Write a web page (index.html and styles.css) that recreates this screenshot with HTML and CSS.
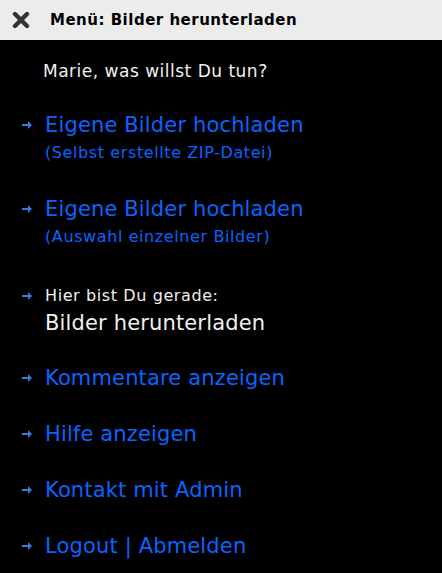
FILE: index.html
```html
<!DOCTYPE html>
<html lang="de">
<head>
  <meta charset="UTF-8" />
  <meta name="viewport" content="width=device-width, initial-scale=1" />
  <title>Menü: Bilder herunterladen</title>
  <link rel="stylesheet" href="styles.css">
</head>
<body>

  <header class="menu-header">
    <svg class="close-icon" width="18" height="18" viewBox="0 0 18 18" aria-label="Schließen">
      <path d="M3 3 L15 15 M15 3 L3 15" stroke="#333" stroke-width="4.4" stroke-linecap="round" />
    </svg>
    <h1>Menü: Bilder herunterladen</h1>
  </header>

  <p class="greeting">Marie, was willst Du tun?</p>

  <ul class="menu">
    <li class="item">
      <span class="arrow"></span>
      <a href="#">Eigene Bilder hochladen</a>
      <span class="sub">(Selbst erstellte ZIP-Datei)</span>
    </li>
    <li class="item">
      <span class="arrow"></span>
      <a href="#">Eigene Bilder hochladen</a>
      <span class="sub">(Auswahl einzelner Bilder)</span>
    </li>
    <li class="item current">
      <span class="arrow"></span>
      <span class="hint">Hier bist Du gerade:</span>
      <span class="here">Bilder herunterladen</span>
    </li>
    <li class="item">
      <span class="arrow"></span>
      <a href="#">Kommentare anzeigen</a>
    </li>
    <li class="item">
      <span class="arrow"></span>
      <a href="#">Hilfe anzeigen</a>
    </li>
    <li class="item">
      <span class="arrow"></span>
      <a href="#">Kontakt mit Admin</a>
    </li>
    <li class="item">
      <span class="arrow"></span>
      <a href="#">Logout | Abmelden</a>
    </li>
  </ul>

</body>
</html>
```

FILE: styles.css
```css
* {
  box-sizing: border-box;
  margin: 0;
  padding: 0;
}

body {
  font-family: 'DejaVu Sans', Verdana, sans-serif;
  background: #000;
  color: #f0f0f0;
  width: 442px;
  min-height: 573px;
}

.menu-header {
  height: 40px;
  background: #ececec;
  display: flex;
  align-items: center;
  padding-left: 12px;
}

.close-icon {
  flex: none;
  margin-right: 20px;
}

.menu-header h1 {
  font-size: 15px;
  font-weight: 700;
  color: #000;
  letter-spacing: 0.5px;
}

.greeting {
  margin-top: 21px;
  padding-left: 43px;
  font-size: 17px;
  line-height: 20px;
  letter-spacing: 0.5px;
}

.menu {
  list-style: none;
  margin-top: 30px;
}

.item {
  display: grid;
  grid-template-columns: 45px auto;
  margin-bottom: 28px;
}

.item.current {
  padding-top: 3px;
}

.arrow {
  grid-row: 1;
  grid-column: 1;
  align-self: center;
  justify-self: start;
  margin-left: 22px;
  width: 10px;
  height: 8px;
  background: url("data:image/svg+xml,%3Csvg xmlns='http://www.w3.org/2000/svg' width='10' height='8'%3E%3Cpath d='M0 3h6V0l4 4-4 4V5H0z' fill='%233a78d8'/%3E%3C/svg%3E") no-repeat;
}

.item a,
.item .here {
  grid-column: 2;
  font-size: 21px;
  line-height: 28px;
  letter-spacing: 0.15px;
  color: #0a64ff;
  text-decoration: none;
}

.item .sub,
.item .hint {
  grid-column: 2;
  font-size: 16px;
  line-height: 28px;
  letter-spacing: 0.6px;
  color: #0a64ff;
}

.current .hint,
.current .here {
  color: #f0f0f0;
}

.current .here {
  line-height: 26px;
}
```
